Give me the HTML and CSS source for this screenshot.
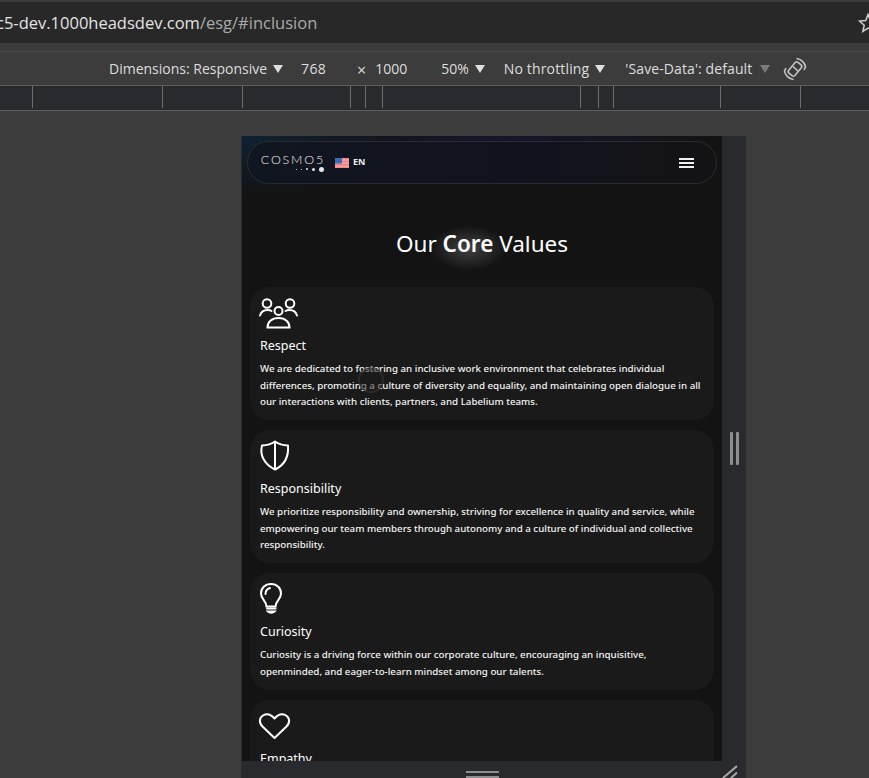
FILE: index.html
```html
<!DOCTYPE html>
<html lang="en">
<head>
    <meta charset="UTF-8">
    <meta name="viewport" content="width=device-width, initial-scale=1.0">
    <title>Our Core Values</title>
    <link rel="stylesheet" href="styles.css">
</head>
<body>
    <!-- Browser address bar -->
    <div class="url-bar">
        <span class="url-text">c5-dev.1000headsdev.com<span class="url-path">/esg/#inclusion</span></span>
        <svg class="star" width="20" height="20" viewBox="0 0 20 20"><path d="M10 1.500l2.300 6 6.200.6-4.700 4.100 1.400 6.200-5.200-3.300-5.200 3.300 1.400-6.200-4.700-4.100 6.200-.6z" fill="none" stroke="#cfcfcf" stroke-width="1.500"/></svg>
    </div>
    <div class="strip"></div>

    <!-- Device toolbar -->
    <div class="device-bar">
        <span class="item item-dimensions">Dimensions: Responsive<i class="caret"></i></span>
        <span class="item item-width">768</span>
        <span class="times">×</span>
        <span class="item item-height">1000</span>
        <span class="item item-zoom">50%<i class="caret"></i></span>
        <span class="item item-throttle">No throttling<i class="caret"></i></span>
        <span class="item item-save">'Save-Data': default<i class="caret caret-dim"></i></span>
        <svg class="rotate" width="24" height="24" viewBox="0 0 24 24" fill="none" stroke="#c4c4c4" stroke-width="1.600">
            <rect x="8" y="5" width="8" height="14" rx="2" transform="rotate(40 12 12)"/>
            <path d="M10 9.500l5 4.500"/>
            <path d="M13.500 1.500c4.500.5 8.500 4.500 9 8.500l-1.500 3"/>
            <path d="M10.500 22.500c-4.500-.5-8.500-4.500-9-8.500l1.500-3"/>
        </svg>
    </div>

    <!-- Ruler -->
    <div class="ruler">
        <svg width="869" height="22" viewBox="0 0 869 22" stroke="#6e6e6e" stroke-width="1">
            <path d="M32.500 0V22M162.500 0V22M242.500 0V22M350.500 0V22M365.500 0V22M382.500 0V22M580.500 0V22M598.500 0V22M613.500 0V22M720.500 0V22M800.500 0V22"/>
        </svg>
    </div>

    <div class="stage">
        <div class="device">
            <div class="page">
                <nav class="navbar">
                    <div class="brand">
                        <div class="logo">
                            <span class="logo-text">COSMO5</span>
                            <span class="logo-dots"><i class="d1"></i><i class="d1"></i><i class="d2"></i><i class="d3"></i><i class="d4"></i></span>
                        </div>
                        <svg class="flag" width="14" height="10" viewBox="0 0 14 10">
                            <rect width="14" height="10" fill="#f6c6c6"/>
                            <path d="M0 .7H14M0 2.100H14M0 3.600H14M0 5H14M0 6.500H14M0 7.900H14M0 9.300H14" stroke="#e8686e" stroke-width=".8"/>
                            <rect width="7" height="5.500" fill="#3c68b8"/>
                        </svg>
                        <span class="lang">EN</span>
                    </div>
                    <div class="burger"><i></i><i></i><i></i></div>
                </nav>

                <h1 class="title">Our <strong>Core</strong> Values</h1>

                <div class="cards">
                    <section class="card">
                        <svg class="icon" width="38" height="32" viewBox="1 0 38 32" fill="none" stroke="#fff" stroke-width="2" stroke-linecap="round">
                            <circle cx="8" cy="6.500" r="4.300"/>
                            <circle cx="31" cy="6.500" r="4.300"/>
                            <circle cx="19.500" cy="14" r="4"/>
                            <path d="M1 18.500c1-3.500 4-5.500 7.500-5.500 1.500 0 3 .3 4 1"/>
                            <path d="M38 18.500c-1-3.500-4-5.500-7.500-5.500-1.500 0-3 .3-4 1"/>
                            <path d="M8.500 30.500c0-5.500 4-9.500 11-9.500s11 4 11 9.500z"/>
                        </svg>
                        <h3>Respect</h3>
                        <p>We are dedicated to fostering an inclusive work environment that celebrates individual differences, promoting a culture of diversity and equality, and maintaining open dialogue in all our interactions with clients, partners, and Labelium teams.</p>
                        <span class="ring"></span>
                    </section>

                    <section class="card">
                        <svg class="icon" width="30" height="32" viewBox="0 0 30 32" fill="none" stroke="#fff" stroke-width="2" stroke-linejoin="round">
                            <path d="M15 1.500c3.500 2.500 8 3.800 13 4 .8 10.500-3.500 19.500-13 24C5.500 25-.8 16 2 5.500c5-.2 9.500-1.500 13-4z"/>
                            <path d="M15 1.500v28"/>
                        </svg>
                        <h3>Responsibility</h3>
                        <p>We prioritize responsibility and ownership, striving for excellence in quality and service, while empowering our team members through autonomy and a culture of individual and collective responsibility.</p>
                    </section>

                    <section class="card">
                        <svg class="icon" width="23" height="32" viewBox="0 0 23 32" fill="none" stroke="#fff" stroke-width="2" stroke-linecap="round">
                            <path d="M6.500 23.500c0-3-1.500-4.800-3-6.800C2 14.700 1 12.700 1 10.500 1 5 5 1 11 1s10 4 10 9.500c0 2.200-1 4.200-2.500 6.200-1.500 2-3 3.800-3 6.800z"/>
                            <path d="M5.500 11c0-3 2-5.300 4.500-6"/>
                            <path d="M7 25.500h8.500"/>
                            <path d="M8 28.500c1.500 1.500 5 1.500 6.500 0z" fill="#fff"/>
                        </svg>
                        <h3>Curiosity</h3>
                        <p>Curiosity is a driving force within our corporate culture, encouraging an inquisitive, openminded, and eager-to-learn mindset among our talents.</p>
                    </section>

                    <section class="card">
                        <svg class="icon" width="32" height="32" viewBox="1 -3 32 32" fill="none" stroke="#fff" stroke-width="2" stroke-linejoin="round">
                            <path d="M15.500 25L3.500 13.500C-.5 9.500.5 4.500 4 2.500c3.500-2 8-1 11.500 3 3.500-4 8-5 11.500-3 3.500 2 4.500 7 .5 11z"/>
                        </svg>
                        <h3>Empathy</h3>
                    </section>
                </div>
            </div>
            <div class="side-handle"><i></i><i></i></div>
        </div>
        <div class="bottom-handle">
            <span class="bars"><i></i><i></i></span>
            <svg class="corner" width="20" height="17" viewBox="0 0 20 17" stroke="#a8a8a8" stroke-width="2"><path d="M1 17L15 5M9 17L15 11.500"/></svg>
        </div>
    </div>
</body>
</html>
```

FILE: styles.css
```css
* {
    box-sizing: border-box;
}

html, body {
    height: 100%;
}

body {
    margin: 0;
    background-color: #3c3c3c;
    color: #ffffff;
    font-family: "Noto Sans", "Open Sans", sans-serif;
    overflow: hidden;
}

/* Browser chrome */
.url-bar {
    height: 43px;
    background-color: #282828;
    border-top: 2px solid #3c3c3c;
    display: flex;
    align-items: center;
    justify-content: space-between;
    overflow: hidden;
}

.url-text {
    font-family: "Open Sans", sans-serif;
    font-size: 16.500px;
    color: #e3e3e3;
    margin-left: -4px;
    white-space: nowrap;
}

.url-path {
    color: #a8abad;
}

.star {
    margin-right: -9px;
    flex-shrink: 0;
}

.strip {
    height: 8px;
}

.device-bar {
    height: 35px;
    border-top: 1px solid #4a4a4a;
    border-bottom: 1px solid #5c5c5c;
    background-color: #3c3c3c;
    display: flex;
    align-items: center;
    padding-left: 109px;
    font-family: "Open Sans", sans-serif;
    font-size: 14px;
    color: #dedede;
}

.item {
    display: flex;
    align-items: center;
    white-space: nowrap;
}

.caret {
    display: inline-block;
    width: 0;
    height: 0;
    margin-left: 6px;
    border-left: 5px solid transparent;
    border-right: 5px solid transparent;
    border-top: 8px solid #dedede;
}

.caret-dim {
    margin-left: 8px;
    border-top-color: #7c7c7c;
}

.item-width {
    margin-left: 18px;
    letter-spacing: 0.300px;
}

.times {
    margin-left: 31px;
    margin-top: 3px;
    font-size: 16px;
}

.item-height {
    margin-left: 9px;
}

.item-zoom {
    margin-left: 34px;
}

.item-throttle {
    margin-left: 19px;
    letter-spacing: 0.150px;
}

.item-save {
    margin-left: 20px;
    letter-spacing: 0.100px;
}

.rotate {
    margin-left: 13px;
}

.ruler {
    height: 25px;
    background-color: #292a2d;
    border-bottom: 1px solid #5c5c5c;
}

.ruler svg {
    display: block;
}

/* Device frame */
.stage {
    padding-left: 241px;
    padding-top: 25px;
}

.device {
    display: flex;
    width: 505px;
    height: 625px;
    border-left: 1px solid #292a2d;
}

.page {
    position: relative;
    z-index: 0;
    width: 480px;
    flex-shrink: 0;
    overflow: hidden;
    padding: 5px 8px 0;
    background-color: #131313;
    background-image:
        radial-gradient(ellipse 160px 60px at 0 0, #0e2233, rgba(14, 34, 51, 0)),
        radial-gradient(ellipse 200px 50px at 55% 0, #15152c, rgba(21, 21, 44, 0));
}

.navbar {
    height: 43px;
    margin: 0 -3px;
    padding: 0 22px 0 12px;
    border: 1px solid #2a2b30;
    border-radius: 22px;
    background-image: linear-gradient(90deg, #10161f 0, #12121e 55%, #131315 100%);
    display: flex;
    align-items: center;
    justify-content: space-between;
}

.brand {
    display: flex;
    align-items: center;
}

.logo {
    display: flex;
    flex-direction: column;
    align-items: flex-end;
    width: 64px;
}

.logo-text {
    font-family: "Lato", sans-serif;
    font-weight: 300;
    font-size: 12.500px;
    line-height: 12px;
    letter-spacing: 1.800px;
    margin-right: -1px;
    color: #f0f0f0;
    white-space: nowrap;
}

.logo-dots {
    display: flex;
    align-items: center;
    gap: 4px;
    margin-top: 1px;
}

.logo-dots i {
    display: block;
    border-radius: 50%;
    background-color: #e6e6e6;
}

.d1 {
    width: 1px;
    height: 1px;
}

.d2 {
    width: 2px;
    height: 2px;
}

.d3 {
    width: 3px;
    height: 3px;
}

.d4 {
    width: 5px;
    height: 5px;
}

.flag {
    margin-left: 11px;
}

.lang {
    margin-left: 4px;
    margin-top: -2px;
    font-size: 9px;
    font-weight: 700;
    color: #eeeeee;
}

.burger {
    display: flex;
    flex-direction: column;
    gap: 2px;
}

.burger i {
    display: block;
    width: 15px;
    height: 2px;
    background-color: #f0f0f0;
}

.title {
    margin: 43px 0 26px;
    text-align: center;
    font-size: 22.500px;
    line-height: 34px;
    font-weight: 400;
}

.title strong {
    position: relative;
    font-weight: 600;
}

.title strong::before {
    content: "";
    position: absolute;
    left: 0;
    right: 0;
    top: 5px;
    bottom: -4px;
    z-index: -1;
    background: radial-gradient(closest-side, rgba(255, 255, 255, 0.2), rgba(255, 255, 255, 0));
    transform: scale(1.500);
}

.cards {
    display: flex;
    flex-direction: column;
    gap: 10px;
}

.card {
    position: relative;
    padding: 10px 10px 9.500px;
    border-radius: 20px;
    background-color: #1a1a1a;
}

.icon {
    display: block;
    overflow: visible;
}

.card h3 {
    margin: 7px 0 5px;
    font-size: 12.500px;
    line-height: 20px;
    font-weight: 400;
}

.card p {
    margin: 0;
    font-size: 9.750px;
    line-height: 16.500px;
    font-weight: 500;
    color: #f4f4f4;
}

.ring {
    position: absolute;
    left: 108px;
    top: 80px;
    width: 26px;
    height: 26px;
    border: 2px solid rgba(70, 70, 70, 0.4);
    border-radius: 50%;
    background-color: rgba(26, 26, 26, 0.5);
}

.side-handle {
    flex: 1;
    background-color: #292a2d;
    display: flex;
    justify-content: center;
    gap: 3px;
    padding-top: 296px;
}

.side-handle i {
    display: block;
    width: 3px;
    height: 33px;
    border-radius: 1px;
    background-color: #8e8e8e;
}

.bottom-handle {
    width: 505px;
    height: 17px;
    background-color: #292a2d;
    display: flex;
    justify-content: space-between;
    padding-left: 225px;
}

.bars {
    display: flex;
    flex-direction: column;
    gap: 3px;
    padding-top: 10px;
}

.bars i {
    display: block;
    width: 33px;
    height: 3px;
    background-color: #8e8e8e;
}

.corner {
    flex-shrink: 0;
    margin-right: 4px;
}
```
